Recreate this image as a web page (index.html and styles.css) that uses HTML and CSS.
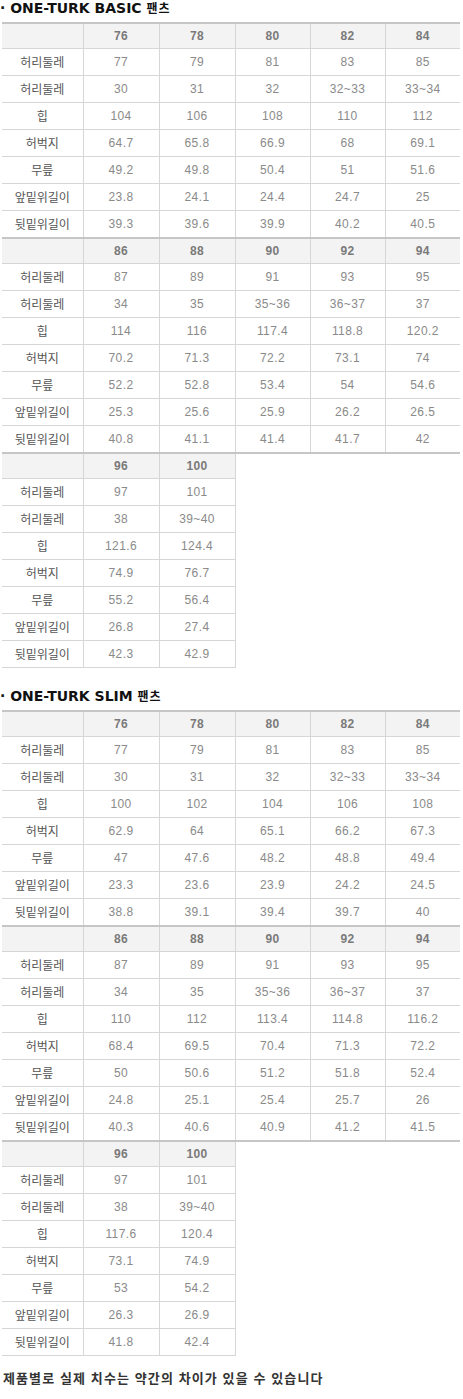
FILE: index.html
```html
<!DOCTYPE html>
<html lang="ko">
<head>
<meta charset="utf-8">
<title>ONE-TURK 사이즈</title>
<link rel="stylesheet" href="styles.css">
</head>
<body>
<h2 class="title">· ONE-TURK BASIC <span class="kr">팬츠</span></h2>
<table class="size">
<colgroup><col class="c-label"><col class="c-a"><col class="c-a"><col class="c-b"><col class="c-b"><col class="c-b"></colgroup>
<tbody>
<tr class="hd"><th></th><td>76</td><td>78</td><td>80</td><td>82</td><td>84</td></tr>
<tr><th>허리둘레</th><td>77</td><td>79</td><td>81</td><td>83</td><td>85</td></tr>
<tr><th>허리둘레</th><td>30</td><td>31</td><td>32</td><td>32~33</td><td>33~34</td></tr>
<tr><th>힙</th><td>104</td><td>106</td><td>108</td><td>110</td><td>112</td></tr>
<tr><th>허벅지</th><td>64.7</td><td>65.8</td><td>66.9</td><td>68</td><td>69.1</td></tr>
<tr><th>무릎</th><td>49.2</td><td>49.8</td><td>50.4</td><td>51</td><td>51.6</td></tr>
<tr><th>앞밑위길이</th><td>23.8</td><td>24.1</td><td>24.4</td><td>24.7</td><td>25</td></tr>
<tr><th>뒷밑위길이</th><td>39.3</td><td>39.6</td><td>39.9</td><td>40.2</td><td>40.5</td></tr>
</tbody>
<tbody>
<tr class="hd"><th></th><td>86</td><td>88</td><td>90</td><td>92</td><td>94</td></tr>
<tr><th>허리둘레</th><td>87</td><td>89</td><td>91</td><td>93</td><td>95</td></tr>
<tr><th>허리둘레</th><td>34</td><td>35</td><td>35~36</td><td>36~37</td><td>37</td></tr>
<tr><th>힙</th><td>114</td><td>116</td><td>117.4</td><td>118.8</td><td>120.2</td></tr>
<tr><th>허벅지</th><td>70.2</td><td>71.3</td><td>72.2</td><td>73.1</td><td>74</td></tr>
<tr><th>무릎</th><td>52.2</td><td>52.8</td><td>53.4</td><td>54</td><td>54.6</td></tr>
<tr><th>앞밑위길이</th><td>25.3</td><td>25.6</td><td>25.9</td><td>26.2</td><td>26.5</td></tr>
<tr><th>뒷밑위길이</th><td>40.8</td><td>41.1</td><td>41.4</td><td>41.7</td><td>42</td></tr>
</tbody>
<tbody>
<tr class="hd"><th></th><td>96</td><td>100</td><td class="x"></td><td class="x"></td><td class="x"></td></tr>
<tr><th>허리둘레</th><td>97</td><td>101</td><td class="x"></td><td class="x"></td><td class="x"></td></tr>
<tr><th>허리둘레</th><td>38</td><td>39~40</td><td class="x"></td><td class="x"></td><td class="x"></td></tr>
<tr><th>힙</th><td>121.6</td><td>124.4</td><td class="x"></td><td class="x"></td><td class="x"></td></tr>
<tr><th>허벅지</th><td>74.9</td><td>76.7</td><td class="x"></td><td class="x"></td><td class="x"></td></tr>
<tr><th>무릎</th><td>55.2</td><td>56.4</td><td class="x"></td><td class="x"></td><td class="x"></td></tr>
<tr><th>앞밑위길이</th><td>26.8</td><td>27.4</td><td class="x"></td><td class="x"></td><td class="x"></td></tr>
<tr><th>뒷밑위길이</th><td>42.3</td><td>42.9</td><td class="x"></td><td class="x"></td><td class="x"></td></tr>
</tbody>
</table>

<h2 class="title second">· ONE-TURK SLIM <span class="kr">팬츠</span></h2>
<table class="size">
<colgroup><col class="c-label"><col class="c-a"><col class="c-a"><col class="c-b"><col class="c-b"><col class="c-b"></colgroup>
<tbody>
<tr class="hd"><th></th><td>76</td><td>78</td><td>80</td><td>82</td><td>84</td></tr>
<tr><th>허리둘레</th><td>77</td><td>79</td><td>81</td><td>83</td><td>85</td></tr>
<tr><th>허리둘레</th><td>30</td><td>31</td><td>32</td><td>32~33</td><td>33~34</td></tr>
<tr><th>힙</th><td>100</td><td>102</td><td>104</td><td>106</td><td>108</td></tr>
<tr><th>허벅지</th><td>62.9</td><td>64</td><td>65.1</td><td>66.2</td><td>67.3</td></tr>
<tr><th>무릎</th><td>47</td><td>47.6</td><td>48.2</td><td>48.8</td><td>49.4</td></tr>
<tr><th>앞밑위길이</th><td>23.3</td><td>23.6</td><td>23.9</td><td>24.2</td><td>24.5</td></tr>
<tr><th>뒷밑위길이</th><td>38.8</td><td>39.1</td><td>39.4</td><td>39.7</td><td>40</td></tr>
</tbody>
<tbody>
<tr class="hd"><th></th><td>86</td><td>88</td><td>90</td><td>92</td><td>94</td></tr>
<tr><th>허리둘레</th><td>87</td><td>89</td><td>91</td><td>93</td><td>95</td></tr>
<tr><th>허리둘레</th><td>34</td><td>35</td><td>35~36</td><td>36~37</td><td>37</td></tr>
<tr><th>힙</th><td>110</td><td>112</td><td>113.4</td><td>114.8</td><td>116.2</td></tr>
<tr><th>허벅지</th><td>68.4</td><td>69.5</td><td>70.4</td><td>71.3</td><td>72.2</td></tr>
<tr><th>무릎</th><td>50</td><td>50.6</td><td>51.2</td><td>51.8</td><td>52.4</td></tr>
<tr><th>앞밑위길이</th><td>24.8</td><td>25.1</td><td>25.4</td><td>25.7</td><td>26</td></tr>
<tr><th>뒷밑위길이</th><td>40.3</td><td>40.6</td><td>40.9</td><td>41.2</td><td>41.5</td></tr>
</tbody>
<tbody>
<tr class="hd"><th></th><td>96</td><td>100</td><td class="x"></td><td class="x"></td><td class="x"></td></tr>
<tr><th>허리둘레</th><td>97</td><td>101</td><td class="x"></td><td class="x"></td><td class="x"></td></tr>
<tr><th>허리둘레</th><td>38</td><td>39~40</td><td class="x"></td><td class="x"></td><td class="x"></td></tr>
<tr><th>힙</th><td>117.6</td><td>120.4</td><td class="x"></td><td class="x"></td><td class="x"></td></tr>
<tr><th>허벅지</th><td>73.1</td><td>74.9</td><td class="x"></td><td class="x"></td><td class="x"></td></tr>
<tr><th>무릎</th><td>53</td><td>54.2</td><td class="x"></td><td class="x"></td><td class="x"></td></tr>
<tr><th>앞밑위길이</th><td>26.3</td><td>26.9</td><td class="x"></td><td class="x"></td><td class="x"></td></tr>
<tr><th>뒷밑위길이</th><td>41.8</td><td>42.4</td><td class="x"></td><td class="x"></td><td class="x"></td></tr>
</tbody>
</table>

<p class="note">제품별로 실제 치수는 약간의 차이가 있을 수 있습니다</p>
</body>
</html>
```

FILE: styles.css
```css
html, body {
  margin: 0;
  padding: 0;
  background: #ffffff;
}

body {
  font-family: "Liberation Sans", "Noto Sans CJK KR", sans-serif;
  width: 463px;
}

.title {
  margin: 0 0 6px 0;
  font-family: "DejaVu Sans", "Noto Sans CJK KR", sans-serif;
  font-size: 14px;
  line-height: 16px;
  font-weight: bold;
  color: #111111;
  white-space: nowrap;
}

.title.second {
  margin-top: 20px;
}

.title .kr {
  font-family: "Noto Sans CJK KR", sans-serif;
  font-size: 12px;
  font-weight: bold;
  letter-spacing: 1px;
}

.size {
  margin-left: 2px;
  width: 458px;
  border-collapse: collapse;
  table-layout: fixed;
}

.c-label { width: 81px; }
.c-a { width: 76px; }
.c-b { width: 75px; }

.size th,
.size td {
  border: 1px solid #d6d6d6;
  height: 26px;
  padding: 0;
  text-align: center;
  vertical-align: middle;
  font-size: 12px;
  line-height: 14px;
}

.size td {
  font-family: "Liberation Sans", sans-serif;
  color: #8a8a8a;
  letter-spacing: 0.4px;
}

.size th {
  font-family: "Noto Sans CJK KR", sans-serif;
  font-weight: normal;
  color: #555555;
  border-left: none;
}

.size td:last-child {
  border-right: none;
}

.size tr.hd th,
.size tr.hd td {
  border-top: 2px solid #c6c6c6;
  background: #f3f3f3;
  height: 24px;
}

.size tr.hd td {
  font-weight: bold;
  color: #7a7a7a;
}

.size td.x {
  border: none;
  background: transparent;
}

.size tr.hd td.x {
  border-top: 2px solid #c6c6c6;
  background: transparent;
}

.note {
  margin: 14px 0 0 3px;
  font-family: "Noto Sans CJK KR", sans-serif;
  font-size: 13px;
  line-height: 16px;
  font-weight: bold;
  color: #333333;
  letter-spacing: 1.1px;
  white-space: nowrap;
}
```
